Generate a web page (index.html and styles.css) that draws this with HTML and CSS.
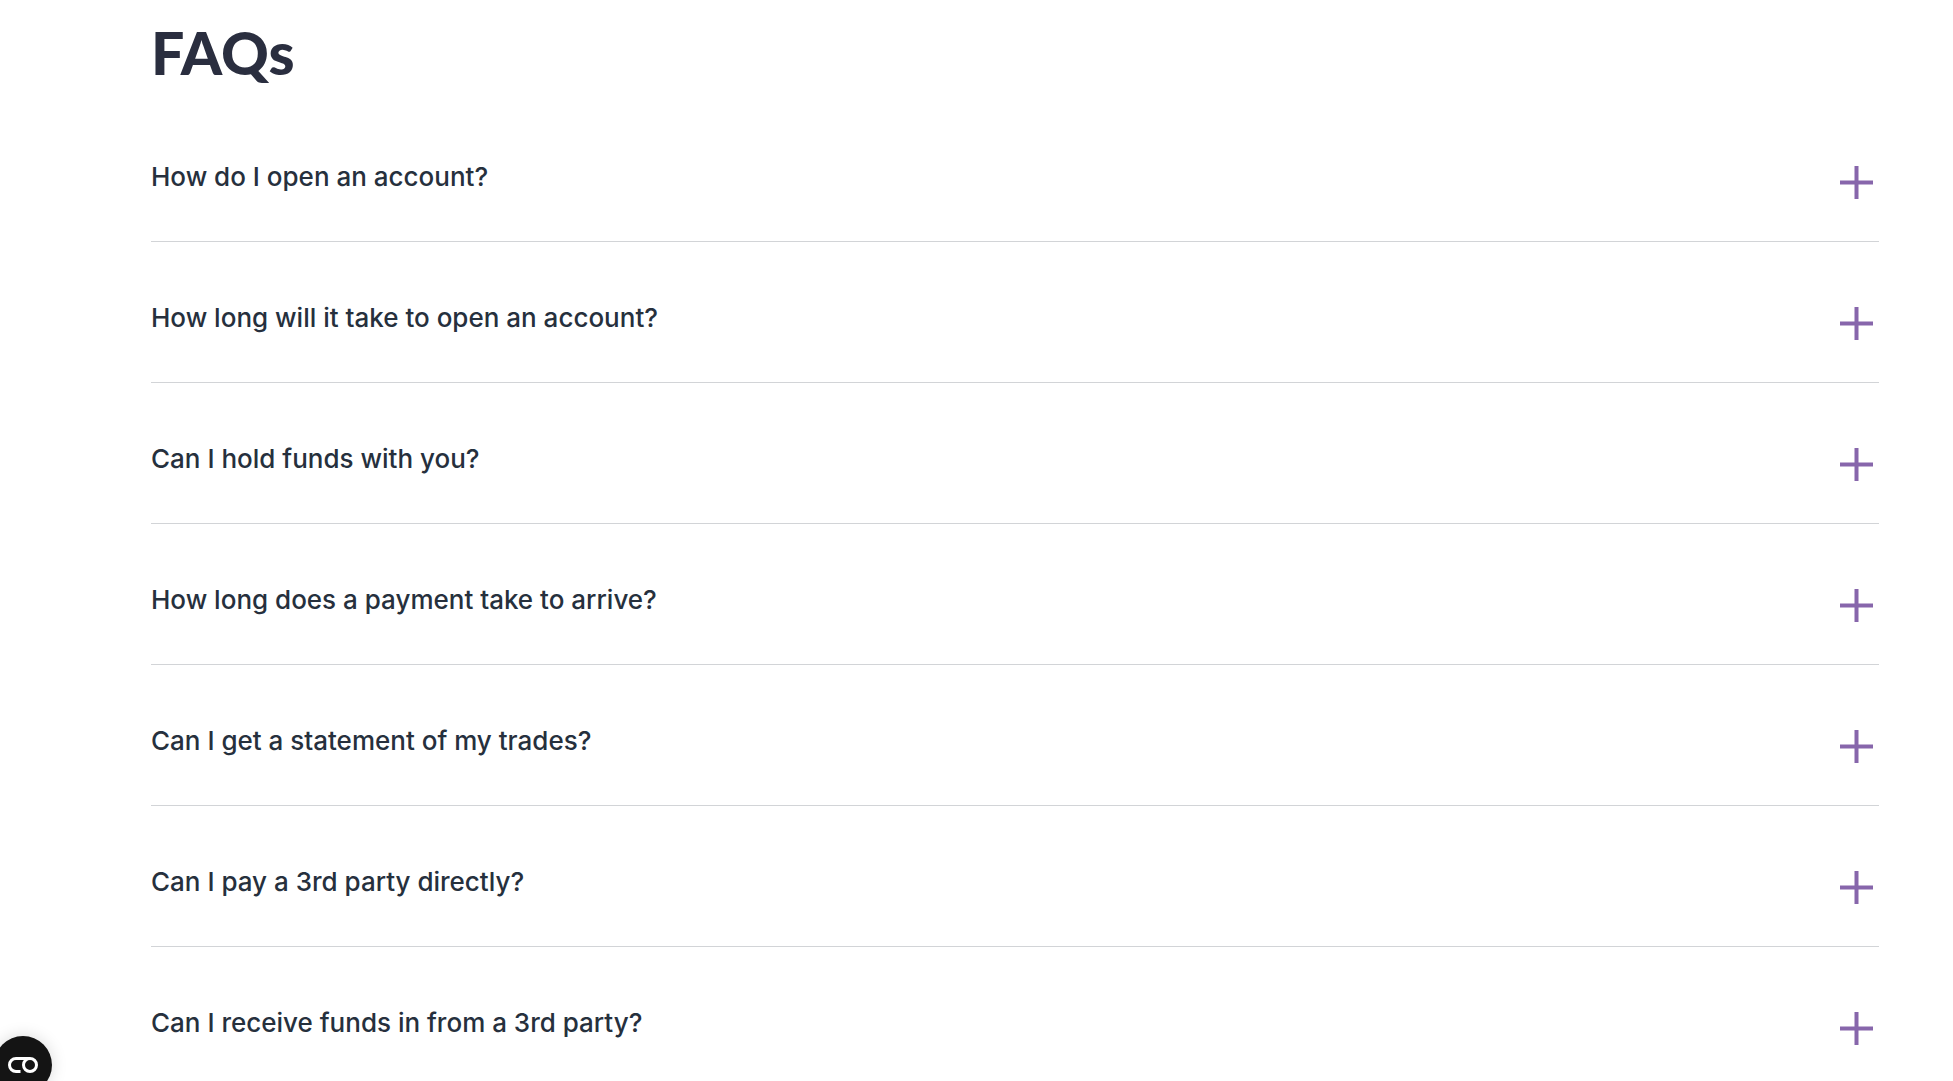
FILE: index.html
```
<!DOCTYPE html>
<html lang="en">
<head>
<meta charset="utf-8">
<meta name="viewport" content="width=device-width, initial-scale=1">
<title>FAQs</title>
<link rel="stylesheet" href="styles.css">
</head>
<body>
<main class="faq">
  <h1 class="faq-title">FAQs</h1>
  <ul class="faq-list">
    <li class="faq-item"><button class="faq-question" type="button" aria-expanded="false"><span>How do I open an account?</span><svg class="plus" viewBox="0 0 33 33" aria-hidden="true"><path d="M16.5 0v33M0 16.5h33"/></svg></button></li>
    <li class="faq-item"><button class="faq-question" type="button" aria-expanded="false"><span>How long will it take to open an account?</span><svg class="plus" viewBox="0 0 33 33" aria-hidden="true"><path d="M16.5 0v33M0 16.5h33"/></svg></button></li>
    <li class="faq-item"><button class="faq-question" type="button" aria-expanded="false"><span>Can I hold funds with you?</span><svg class="plus" viewBox="0 0 33 33" aria-hidden="true"><path d="M16.5 0v33M0 16.5h33"/></svg></button></li>
    <li class="faq-item"><button class="faq-question" type="button" aria-expanded="false"><span>How long does a payment take to arrive?</span><svg class="plus" viewBox="0 0 33 33" aria-hidden="true"><path d="M16.5 0v33M0 16.5h33"/></svg></button></li>
    <li class="faq-item"><button class="faq-question" type="button" aria-expanded="false"><span>Can I get a statement of my trades?</span><svg class="plus" viewBox="0 0 33 33" aria-hidden="true"><path d="M16.5 0v33M0 16.5h33"/></svg></button></li>
    <li class="faq-item"><button class="faq-question" type="button" aria-expanded="false"><span>Can I pay a 3rd party directly?</span><svg class="plus" viewBox="0 0 33 33" aria-hidden="true"><path d="M16.5 0v33M0 16.5h33"/></svg></button></li>
    <li class="faq-item"><button class="faq-question" type="button" aria-expanded="false"><span>Can I receive funds in from a 3rd party?</span><svg class="plus" viewBox="0 0 33 33" aria-hidden="true"><path d="M16.5 0v33M0 16.5h33"/></svg></button></li>
  </ul>
</main>
<button class="cookie" type="button" aria-label="Cookie settings">
  <svg class="cookie-icon" viewBox="0 0 30 16" aria-hidden="true"><path d="M22 1.5H8a6.500 6.500 0 0 0 0 13h4.500"/><circle cx="22" cy="8" r="6.500"/></svg>
</button>
</body>
</html>
```
FILE: styles.css
```
* { box-sizing: border-box; }
body {
  margin: 0;
  background: #fff;
  color: #2a2e3f;
  font-family: Lato, "Open Sans", sans-serif;
}
.faq { padding: 17px 74px 0 151px; }
.faq-title {
  margin: 0 0 12px;
  font-size: 59px;
  line-height: 72px;
  font-weight: 900;
}
.faq-list {
  margin: 0;
  padding: 0;
  list-style: none;
}
.faq-item { border-bottom: 1px solid #d2d4d7; }
.faq-question {
  display: flex;
  justify-content: space-between;
  align-items: flex-start;
  width: 100%;
  padding: 58px 6px 42px 0;
  border: 0;
  background: none;
  color: #26303d;
  font: 500 26px/36px Inter, "Open Sans", sans-serif;
  text-align: left;
  cursor: pointer;
}
.plus {
  flex: none;
  width: 33px;
  height: 33px;
  margin-top: 7px;
  fill: none;
  stroke: #8766ab;
  stroke-width: 4;
}
.cookie {
  position: fixed;
  left: -6px;
  bottom: -13px;
  display: flex;
  align-items: center;
  justify-content: center;
  width: 58px;
  height: 58px;
  padding: 0;
  border: 0;
  border-radius: 50%;
  background: #141414;
  box-shadow: 0 0 16px rgba(0, 0, 0, 0.15);
  cursor: pointer;
}
.cookie-icon {
  width: 30px;
  height: 16px;
  fill: none;
  stroke: #fff;
  stroke-width: 3;
}
```
